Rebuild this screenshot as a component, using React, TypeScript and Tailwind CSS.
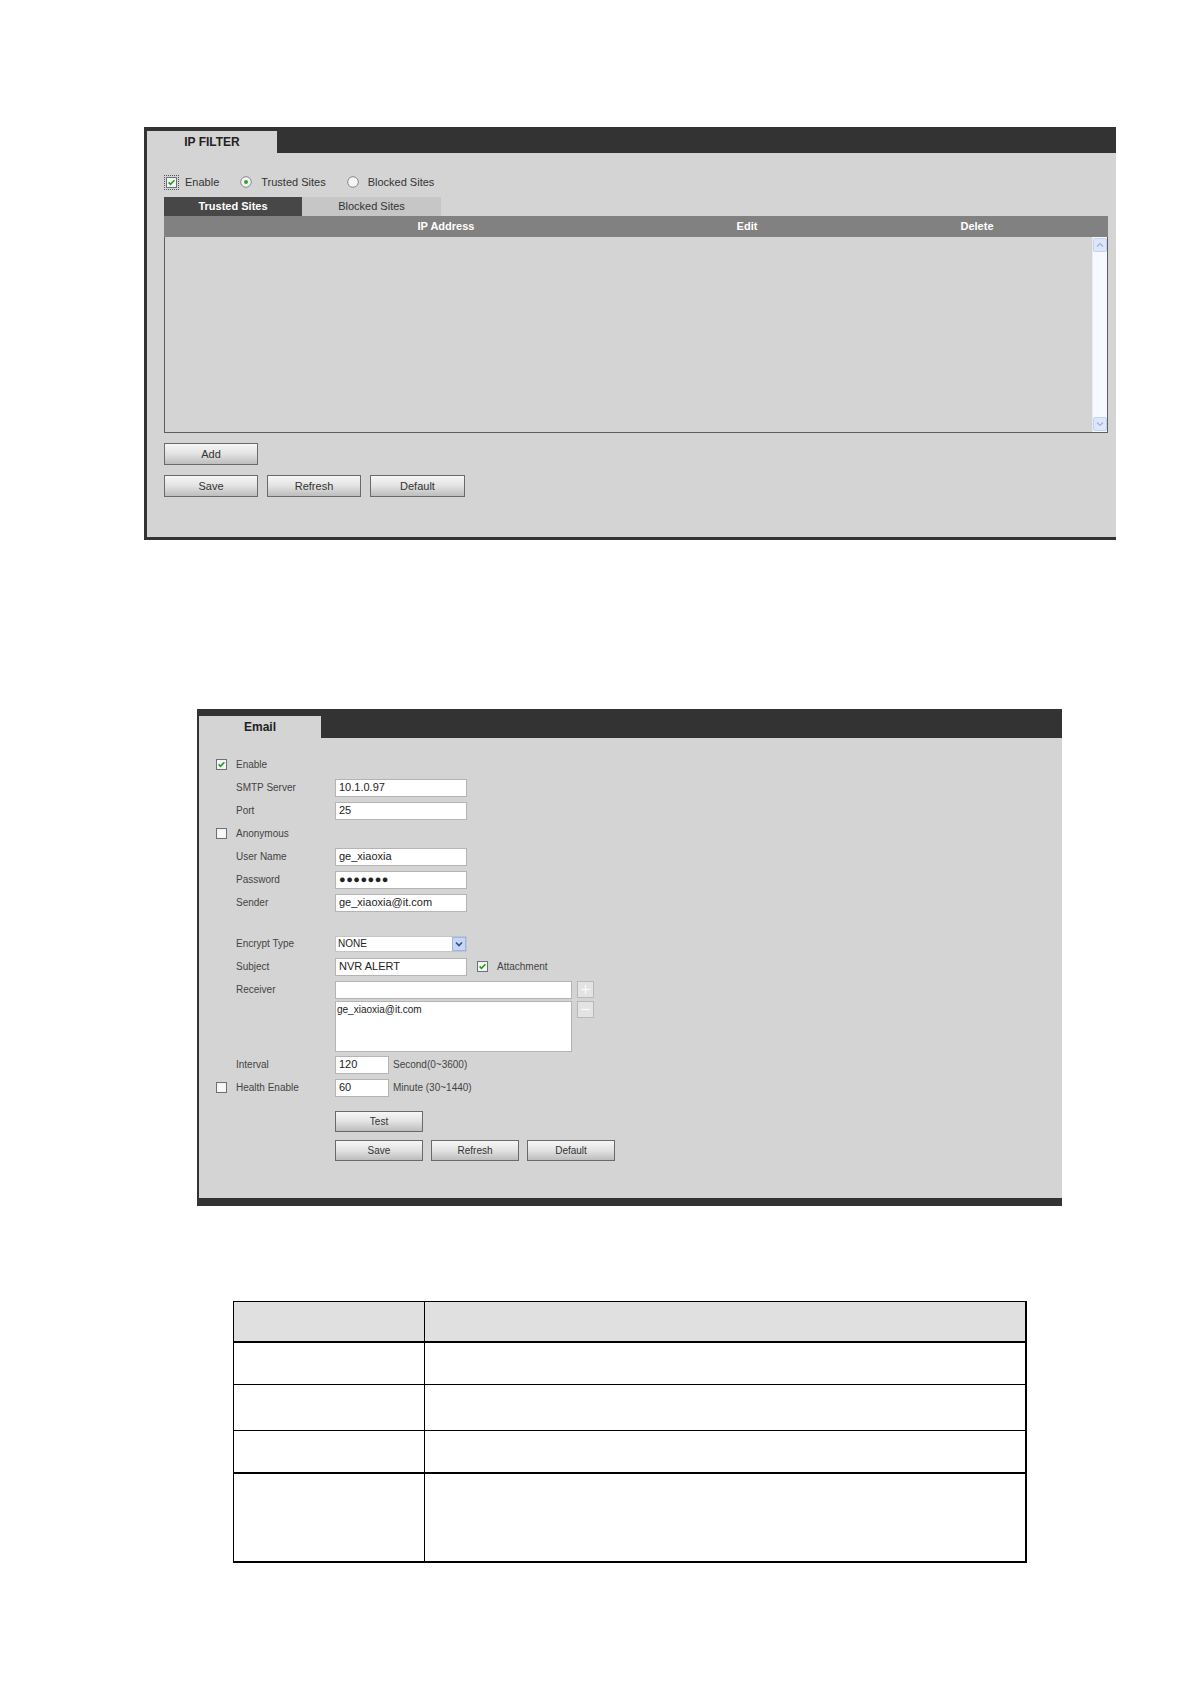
import React from "react";

function CheckBox({ checked }: { checked?: boolean }) {
  return (
    <svg width="11" height="11" viewBox="0 0 11 11" className="block shrink-0">
      <rect x="0.5" y="0.5" width="10" height="10" fill="#eeeeee" stroke="#6a717a" />
      <rect x="1.5" y="1.5" width="8" height="8" fill="#f8f8f8" />
      {checked && (
        <path d="M2.6 5.4 L4.5 7.4 L8.4 3.2" fill="none" stroke="#1f9e1f" strokeWidth="1.6" />
      )}
    </svg>
  );
}

function Radio({ checked }: { checked?: boolean }) {
  return (
    <svg width="12" height="12" viewBox="0 0 12 12" className="block shrink-0">
      <circle cx="6" cy="6" r="5.3" fill="#f4f4f4" stroke="#85898e" strokeWidth="1" />
      {checked && <circle cx="6" cy="6" r="2" fill="#2ba52b" />}
    </svg>
  );
}

function Btn({ label, w, h }: { label: string; w: string; h: string }) {
  return (
    <div
      className={`${w} ${h} shrink-0 flex items-center justify-center border border-[#6a6a6a] bg-gradient-to-b from-[#f7f7f7] via-[#e2e2e2] to-[#bdbdbd] text-[#333]`}
    >
      {label}
    </div>
  );
}

function Input({ w, value, className = "" }: { w: string; value: string; className?: string }) {
  return (
    <div
      className={`${w} h-[18px] shrink-0 bg-white border border-[#b4b4b4] flex items-center pl-[3px] text-[11px] text-[#222] ${className}`}
    >
      {value}
    </div>
  );
}

function SmallBtn({ sign }: { sign: "+" | "-" }) {
  return (
    <div className="w-[17px] h-[17px] border border-[#b8b8b8] bg-[#e3e3e3] flex items-center justify-center">
      <svg width="11" height="11" viewBox="0 0 11 11">
        <path d="M1 5.5 H10" stroke="#fbfbfb" strokeWidth="1.2" />
        {sign === "+" && <path d="M5.5 1 V10" stroke="#fbfbfb" strokeWidth="1.2" />}
      </svg>
    </div>
  );
}

function IPFilter() {
  return (
    <div className="ml-[144px] w-[972px] h-[413px] bg-[#d4d4d4] border-l-[3px] border-b-[3px] border-[#333333] flex flex-col">
      <div className="h-[26px] bg-[#333333] flex items-end">
        <div className="w-[130px] h-[22px] bg-[#d4d4d4] flex items-center justify-center text-[12px] font-bold text-[#222]">
          IP FILTER
        </div>
      </div>
      <div className="pl-[17px] pr-[8px] flex flex-col">
        <div className="mt-[21px] h-[16px] flex items-center text-[11px] text-[#333]">
          <span className="border border-dotted border-[#555] p-px">
            <CheckBox checked />
          </span>
          <span className="ml-[6px]">Enable</span>
          <span className="ml-[21px]">
            <Radio checked />
          </span>
          <span className="ml-[9px]">Trusted Sites</span>
          <span className="ml-[21px]">
            <Radio />
          </span>
          <span className="ml-[9px]">Blocked Sites</span>
        </div>
        <div className="mt-[7px] h-[19px] flex text-[11px]">
          <div className="w-[138px] bg-[#474747] text-white font-bold flex items-center justify-center">
            Trusted Sites
          </div>
          <div className="w-[139px] bg-[#c6c6c6] text-[#333] flex items-center justify-center">
            Blocked Sites
          </div>
        </div>
        <div className="w-[944px] h-[21px] bg-[#818181] flex items-center text-[11px] font-bold text-white">
          <div className="ml-[50px] w-[464px] shrink-0 text-center">IP Address</div>
          <div className="w-[138px] shrink-0 text-center">Edit</div>
          <div className="ml-[61px] w-[200px] shrink-0 text-center">Delete</div>
        </div>
        <div className="w-[944px] h-[196px] border-l border-r border-b border-[#5e5e5e] flex justify-end">
          <div className="w-[15px] h-full bg-[#f6f9ff] border-l border-[#e3e9f5] flex flex-col justify-between py-px">
            <div className="w-[14px] h-[14px] rounded-[2px] bg-[#dce7fb] border border-[#c3d3f0] flex items-center justify-center">
              <svg width="8" height="6" viewBox="0 0 8 6">
                <path d="M1 4.5 L4 1.5 L7 4.5" fill="none" stroke="#9fb3d6" strokeWidth="1.2" />
              </svg>
            </div>
            <div className="w-[14px] h-[14px] rounded-[2px] bg-[#dce7fb] border border-[#c3d3f0] flex items-center justify-center">
              <svg width="8" height="6" viewBox="0 0 8 6">
                <path d="M1 1.5 L4 4.5 L7 1.5" fill="none" stroke="#9fb3d6" strokeWidth="1.2" />
              </svg>
            </div>
          </div>
        </div>
        <div className="mt-[10px] text-[11px]">
          <Btn label="Add" w="w-[94px]" h="h-[22px]" />
        </div>
        <div className="mt-[10px] flex gap-[9px] text-[11px]">
          <Btn label="Save" w="w-[94px]" h="h-[22px]" />
          <Btn label="Refresh" w="w-[94px]" h="h-[22px]" />
          <Btn label="Default" w="w-[95px]" h="h-[22px]" />
        </div>
      </div>
    </div>
  );
}

function Row({
  check,
  label,
  children,
  h = "h-[23px]",
  align = "items-center",
}: {
  check?: "on" | "off";
  label?: string;
  children?: React.ReactNode;
  h?: string;
  align?: string;
}) {
  return (
    <div className={`${h} flex ${align}`}>
      <div className="w-[20px] shrink-0 flex items-center">{check && <CheckBox checked={check === "on"} />}</div>
      <div className="w-[99px] shrink-0 text-[10px] text-[#444]">{label}</div>
      {children}
    </div>
  );
}

function EmailPanel() {
  return (
    <div className="ml-[197px] mt-[169px] w-[865px] h-[497px] bg-[#d4d4d4] border-l-2 border-b-8 border-[#333333] flex flex-col">
      <div className="h-[29px] bg-[#333333] flex items-end">
        <div className="w-[122px] h-[22px] bg-[#d4d4d4] flex items-center justify-center text-[12px] font-bold text-[#222]">
          Email
        </div>
      </div>
      <div className="pl-[17px] flex flex-col">
        <div className="mt-[15px]">
          <Row check="on" label="Enable" />
          <Row label="SMTP Server">
            <Input w="w-[132px]" value="10.1.0.97" />
          </Row>
          <Row label="Port">
            <Input w="w-[132px]" value="25" />
          </Row>
          <Row check="off" label="Anonymous" />
          <Row label="User Name">
            <Input w="w-[132px]" value="ge_xiaoxia" />
          </Row>
          <Row label="Password">
            <Input w="w-[132px]" value="●●●●●●●" className="text-[9px] tracking-[0.5px]" />
          </Row>
          <Row label="Sender">
            <Input w="w-[132px]" value="ge_xiaoxia@it.com" />
          </Row>
        </div>
        <div className="mt-[18px]">
          <Row label="Encrypt Type">
            <div className="w-[132px] h-[16px] bg-white border border-[#c4c4c4] flex items-center justify-between text-[10px] text-[#222]">
              <span className="pl-[2px]">NONE</span>
              <div className="w-[14px] h-[14px] bg-[#c4d6fa] border border-[#9cb5e3] flex items-center justify-center">
                <svg width="8" height="6" viewBox="0 0 8 6">
                  <path d="M1 1.5 L4 4.5 L7 1.5" fill="none" stroke="#3c4f78" strokeWidth="1.6" />
                </svg>
              </div>
            </div>
          </Row>
          <Row label="Subject">
            <Input w="w-[132px]" value="NVR ALERT" />
            <div className="ml-[10px]">
              <CheckBox checked />
            </div>
            <span className="ml-[9px] text-[10px] text-[#444]">Attachment</span>
          </Row>
          <Row label="Receiver">
            <Input w="w-[237px]" value="" />
            <div className="ml-[5px]">
              <SmallBtn sign="+" />
            </div>
          </Row>
          <Row h="h-[51px]" align="items-start">
            <div className="w-[237px] h-[51px] bg-white border border-[#b4b4b4] text-[10px] text-[#222] pl-px pt-px leading-[14px]">
              ge_xiaoxia@it.com
            </div>
            <div className="ml-[5px]">
              <SmallBtn sign="-" />
            </div>
          </Row>
          <div className="mt-px">
            <Row label="Interval">
              <Input w="w-[54px]" value="120" />
              <span className="ml-[4px] text-[10px] text-[#444]">Second(0~3600)</span>
            </Row>
            <Row check="off" label="Health Enable">
              <Input w="w-[54px]" value="60" />
              <span className="ml-[4px] text-[10px] text-[#444]">Minute (30~1440)</span>
            </Row>
          </div>
        </div>
        <div className="ml-[119px] mt-[12px] text-[10px]">
          <Btn label="Test" w="w-[88px]" h="h-[21px]" />
        </div>
        <div className="ml-[119px] mt-[8px] flex gap-[8px] text-[10px]">
          <Btn label="Save" w="w-[88px]" h="h-[21px]" />
          <Btn label="Refresh" w="w-[88px]" h="h-[21px]" />
          <Btn label="Default" w="w-[88px]" h="h-[21px]" />
        </div>
      </div>
    </div>
  );
}

function ParamTable() {
  const rows = [
    { h: "h-[41px]", b: "border-b-2", bg: "bg-[#e0e0e0]" },
    { h: "h-[42px]", b: "border-b", bg: "bg-white" },
    { h: "h-[46px]", b: "border-b", bg: "bg-white" },
    { h: "h-[43px]", b: "border-b-2", bg: "bg-white" },
    { h: "h-[87px]", b: "", bg: "bg-white" },
  ];
  return (
    <div className="ml-[233px] mt-[95px] w-[794px] border-l border-t border-r-2 border-b-2 border-black">
      {rows.map((r, i) => (
        <div key={i} className={`${r.h} ${r.b} ${r.bg} border-black flex`}>
          <div className="w-[191px] h-full border-r border-black" />
          <div className="flex-1 h-full" />
        </div>
      ))}
    </div>
  );
}

export default function App() {
  return (
    <div className="w-[1191px] h-[1684px] bg-white pt-[127px] font-['Liberation_Sans',Arial,sans-serif]">
      <IPFilter />
      <EmailPanel />
      <ParamTable />
    </div>
  );
}
